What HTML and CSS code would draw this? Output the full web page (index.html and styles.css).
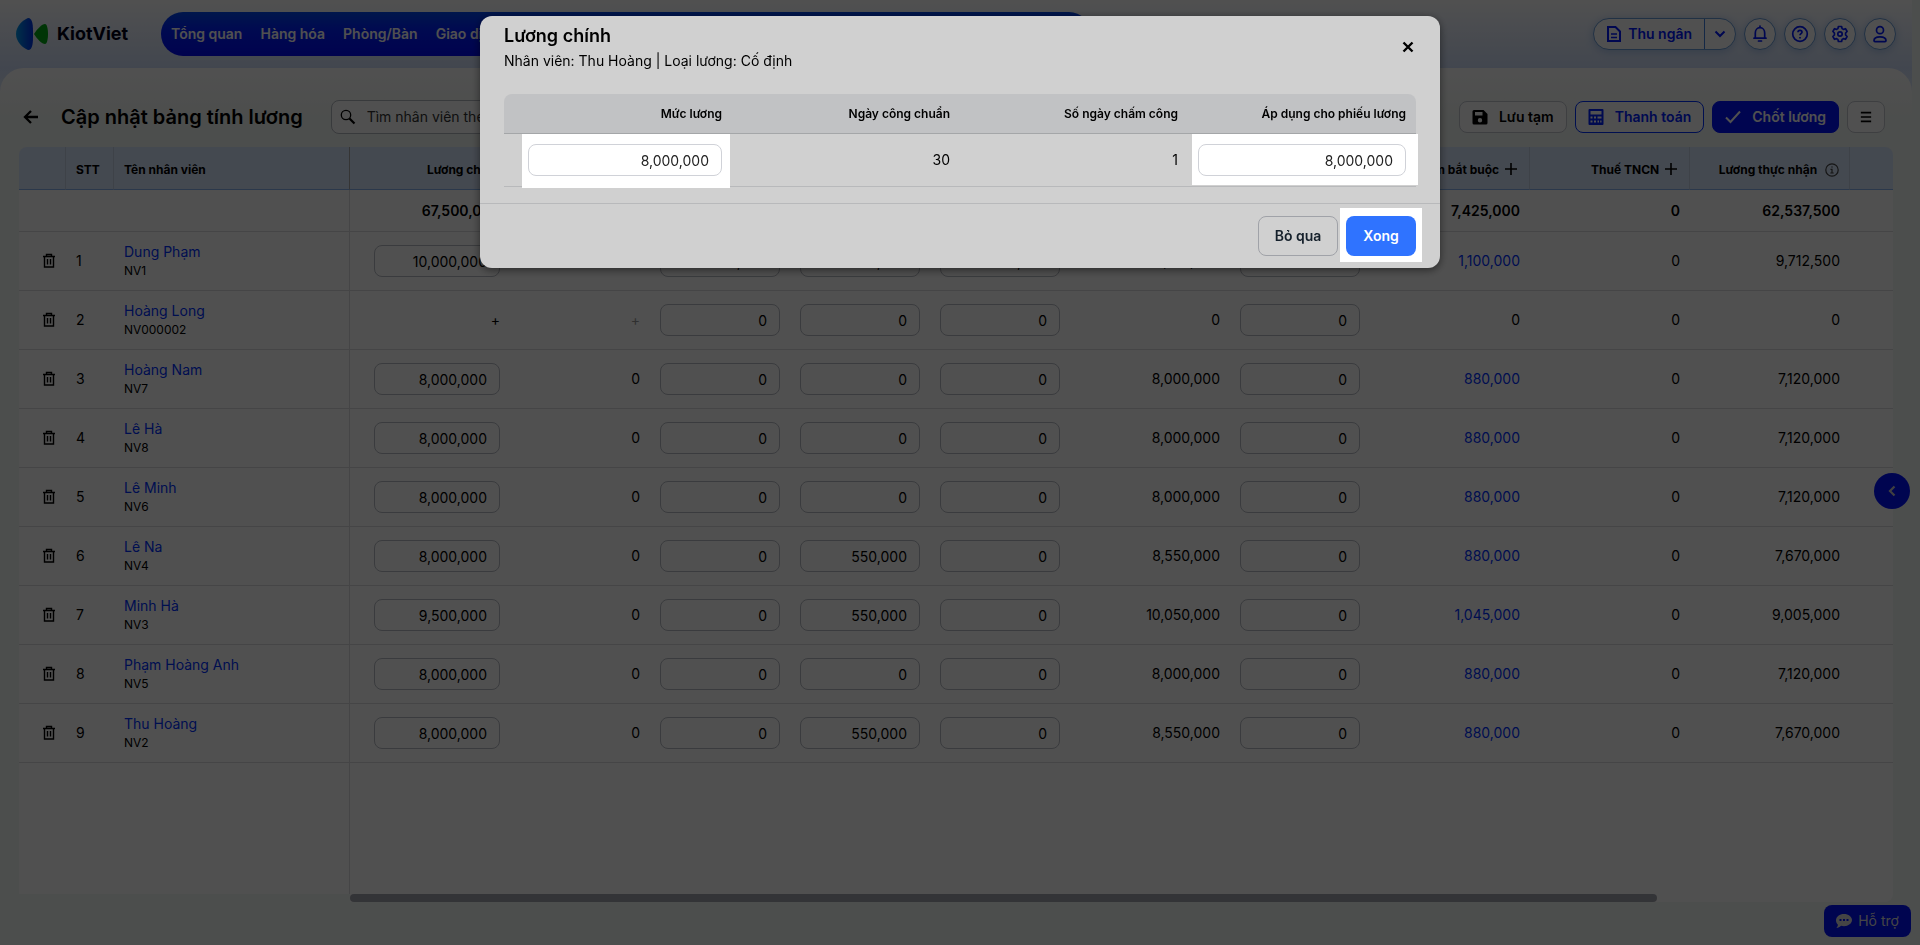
FILE: index.html
```html
<!DOCTYPE html>
<html lang="vi">
<head>
  <meta charset="UTF-8" />
  <meta name="viewport" content="width=device-width, initial-scale=1.0"/>
  <title>KiotViet - Cập nhật bảng tính lương</title>
  <link rel="stylesheet" href="styles.css">
</head>
<body>
  <svg class="sprite">
    <symbol id="i-trash" viewBox="0 0 14 16"><path d="M1 3.500h12M4.500 3V1.500h5V3M2.500 3.500v10.500h9V3.500M5.500 6v5.500M8.500 6v5.500" fill="none" stroke="currentColor" stroke-width="1.400"/></symbol>
  </svg>

  <div class="page">
    <header class="topbar">
      <a class="logo" href="#">
        <svg width="32" height="32" viewBox="0 0 32 32">
          <defs><linearGradient id="lg" x1="0" x2="1"><stop offset="0" stop-color="#0098e8"/><stop offset="1" stop-color="#0030e8"/></linearGradient></defs>
          <path d="M12 0C17 0 17 8 17 16s0 16-5 16C7 30 0 24 0 16S7 2 12 0z" fill="url(#lg)"/>
          <path d="M18 16C21 11 26 6 29 6c2 0 3 5 3 10s-1 10-3 10c-3 0-8-5-11-10z" fill="#00a814"/>
        </svg>
        <span>KiotViet</span>
      </a>
      <nav class="nav">
        <a href="#">Tổng quan</a>
        <a href="#">Hàng hóa</a>
        <a href="#">Phòng/Bàn</a>
        <a href="#">Giao dịch</a>
      </nav>
      <div class="tools">
        <div class="cashier">
          <button class="cashier-main">
            <svg width="14" height="18" viewBox="1 0 14 18" fill="none" stroke="currentColor" stroke-width="2"><path d="M2 2h7.500L14 6.500V16H2z"/><path d="M5 9h6M5 12.500h6" stroke-width="1.500"/></svg>
            Thu ngân
          </button>
          <button class="cashier-drop" aria-label="Mở rộng">
            <svg width="12" height="8" viewBox="0 0 12 8" fill="none" stroke="currentColor" stroke-width="2"><path d="M1.500 1.500L6 6l4.500-4.500"/></svg>
          </button>
        </div>
        <button class="round" aria-label="Thông báo">
          <svg width="18" height="18" viewBox="0 0 18 18" fill="none" stroke="currentColor" stroke-width="1.700"><path d="M9 1v1.500M3 13.200h12M4.300 13V8c0-3 2-5.300 4.700-5.300S13.700 5 13.700 8v5M7.500 16h3" stroke-linecap="round"/></svg>
        </button>
        <button class="round" aria-label="Trợ giúp">
          <svg width="18" height="18" viewBox="0 0 18 18" fill="none" stroke="currentColor" stroke-width="1.700"><circle cx="9" cy="9" r="7.300"/><path d="M7 7.200C7 4.800 11 4.800 11 7.200 11 8.700 9 8.700 9 10.300M9 12v1.500"/></svg>
        </button>
        <button class="round" aria-label="Thiết lập">
          <svg width="18" height="18" viewBox="0 0 18 18" fill="none" stroke="currentColor" stroke-width="1.700" stroke-linejoin="round"><path d="M7.400 1.500h3.200l.5 2.100 1.300.8 2.100-.7 1.600 2.800L14.600 8v2l1.500 1.500-1.600 2.800-2.100-.7-1.300.8-.5 2.100H7.400l-.5-2.100-1.300-.8-2.100.7-1.600-2.800L3.400 10V8L1.900 6.500l1.600-2.800 2.100.7 1.300-.8z"/><circle cx="9" cy="9" r="2.200"/></svg>
        </button>
        <button class="round" aria-label="Tài khoản">
          <svg width="18" height="18" viewBox="0 0 18 18" fill="none" stroke="currentColor" stroke-width="1.700"><circle cx="9" cy="5.200" r="3.500"/><path d="M3 15.600c0-5 12-5 12 0 0 .7-.3 1-1 1H4c-.7 0-1-.3-1-1z"/></svg>
        </button>
      </div>
    </header>

    <main class="panel">
      <div class="toolbar">
        <button class="back" aria-label="Quay lại">
          <svg width="16" height="14" viewBox="0 0 16 14" fill="none" stroke="currentColor" stroke-width="2.300"><path d="M15 7H2M8 1L2 7l6 6"/></svg>
        </button>
        <h1>Cập nhật bảng tính lương</h1>
        <label class="search">
          <svg width="16" height="16" viewBox="0 0 16 16" fill="none" stroke="currentColor"><circle cx="6" cy="6" r="4.700" stroke-width="1.300"/><path d="M9.500 9.500l5 5" stroke-width="2.200"/></svg>
          <input type="text" placeholder="Tìm nhân viên theo mã, tên" aria-label="Tìm nhân viên">
        </label>
        <div class="actions">
          <button class="btn">
            <svg width="16" height="16" viewBox="0 0 16 16"><path fill="currentColor" fill-rule="evenodd" d="M2 1h9.500L15.500 5v9a1.500 1.500 0 0 1-1.500 1.500H2A1.500 1.500 0 0 1 .5 14V2.500A1.500 1.500 0 0 1 2 1zm1 2v3.500h7.500V3zm5 6a2.200 2.200 0 1 0 0 4.400A2.200 2.200 0 0 0 8 9z"/></svg>
            Lưu tạm
          </button>
          <button class="btn outline">
            <svg width="16" height="16" viewBox="0 0 16 16"><path fill="currentColor" fill-rule="evenodd" d="M1.500 0h13a1 1 0 0 1 1 1v14a1 1 0 0 1-1 1h-13a1 1 0 0 1-1-1V1a1 1 0 0 1 1-1zM2.500 2v3.500h11V2zM2.500 7.500v2h2v-2zM6 7.500v2h2v-2zM9.500 7.500v2h4v-2zM2.500 11.500v2h2v-2zM6 11.500v2h2v-2zM9.500 11.500v2h1.500v-2zM12.200 11.500v2h1.300v-2z"/></svg>
            Thanh toán
          </button>
          <button class="btn primary">
            <svg width="16" height="16" viewBox="0 0 16 16" fill="none" stroke="currentColor" stroke-width="2"><path d="M1 8.500l4.500 4.500L15 2.500"/></svg>
            Chốt lương
          </button>
          <button class="btn menu" aria-label="Menu">
            <svg width="14" height="12" viewBox="0 0 14 12" stroke="currentColor" stroke-width="2"><path d="M1 1h12M1 6h12M1 11h12"/></svg>
          </button>
        </div>
      </div>

      <table class="payroll">
        <colgroup>
          <col class="c-del"><col class="c-stt"><col class="c-name">
          <col class="c-wide"><col class="c-mid"><col class="c-mid"><col class="c-mid"><col class="c-mid">
          <col class="c-wide"><col class="c-mid"><col class="c-wide"><col class="c-wide"><col class="c-wide"><col>
        </colgroup>
        <thead>
          <tr>
            <th></th>
            <th class="left">STT</th>
            <th class="left frozen">Tên nhân viên</th>
            <th>Lương chính</th><th></th><th></th><th></th><th></th><th></th><th></th>
            <th>Bảo hiểm bắt buộc <button class="add" aria-label="Thêm"><svg width="12" height="12" viewBox="0 0 12 12" stroke="currentColor" stroke-width="1.600"><path d="M6 0v12M0 6h12"/></svg></button></th>
            <th>Thuế TNCN <button class="add" aria-label="Thêm"><svg width="12" height="12" viewBox="0 0 12 12" stroke="currentColor" stroke-width="1.600"><path d="M6 0v12M0 6h12"/></svg></button></th>
            <th>Lương thực nhận <svg class="info" width="14" height="14" viewBox="0 0 14 14" fill="none" stroke="currentColor" stroke-width="1.200"><circle cx="7" cy="7" r="6.200"/><path d="M5.500 6.300H7V10M5.300 10h3.400M6.300 4h1.400"/></svg></th>
            <th></th>
          </tr>
        </thead>
        <tbody id="rows">
          <tr class="total">
            <td></td><td></td><td class="frozen"></td>
            <td>67,500,000</td><td></td><td></td><td></td><td></td><td></td><td></td>
            <td>7,425,000</td><td>0</td><td>62,537,500</td><td></td>
          </tr>
        </tbody>
      </table>
      <div class="scroll"><div class="thumb"></div></div>
    </main>
    <button class="expand" aria-label="Mở bảng bên">
      <svg width="8" height="12" viewBox="0 0 8 12" fill="none" stroke="currentColor" stroke-width="2.200"><path d="M6.500 1.500L2 6l4.500 4.500"/></svg>
    </button>
    <button class="support">
      <svg width="16" height="14" viewBox="0 0 16 14"><path fill="currentColor" fill-rule="evenodd" d="M8 0c4.400 0 8 2.700 8 6s-3.600 6.200-8 6.200c-1 0-2-.1-2.900-.4C4 12.900 2 13.900.4 13.900c.8-.9 1.400-2 1.500-3.200C.7 9.500 0 7.800 0 6.200 0 2.700 3.600 0 8 0zM3.500 5v2h2V5zM7 5v2h2V5zm3.500 0v2h2V5z"/></svg>
      Hỗ trợ
    </button>
  </div>

  <div class="overlay">
    <section class="modal" role="dialog" aria-labelledby="modalTitle">
      <div class="modal-head">
        <div>
          <h2 id="modalTitle">Lương chính</h2>
          <p>Nhân viên: Thu Hoàng | Loại lương: Cố định</p>
        </div>
        <button class="close" aria-label="Đóng">
          <svg width="12" height="12" viewBox="0 0 12 12" stroke="currentColor" stroke-width="2.400"><path d="M1.500 1.500l9 9M10.500 1.500l-9 9"/></svg>
        </button>
      </div>
      <table class="salary">
        <thead>
          <tr><th>Mức lương</th><th>Ngày công chuẩn</th><th>Số ngày chấm công</th><th>Áp dụng cho phiếu lương</th></tr>
        </thead>
        <tbody>
          <tr>
            <td class="first"><div class="lit lit-level"><input type="text" value="8,000,000" aria-label="Mức lương"></div></td>
            <td>30</td>
            <td>1</td>
            <td><div class="lit lit-apply"><input type="text" value="8,000,000" aria-label="Áp dụng cho phiếu lương"></div></td>
          </tr>
        </tbody>
      </table>
      <div class="modal-foot">
        <button class="skip">Bỏ qua</button>
        <div class="lit lit-done"><button class="done">Xong</button></div>
      </div>
    </section>
  </div>

  <script>
    // name, code, main salary, overtime, allowance, bonus, commission, gross, deduction, insurance, tax, net
    const staff = [
      ['Dung Phạm', 'NV1', '10,000,000', '0', '550,000', '250,000', '12,500', '10,812,500', '0', '1,100,000', '0', '9,712,500'],
      ['Hoàng Long', 'NV000002', '+', '+', '0', '0', '0', '0', '0', '0', '0', '0'],
      ['Hoàng Nam', 'NV7', '8,000,000', '0', '0', '0', '0', '8,000,000', '0', '880,000', '0', '7,120,000'],
      ['Lê Hà', 'NV8', '8,000,000', '0', '0', '0', '0', '8,000,000', '0', '880,000', '0', '7,120,000'],
      ['Lê Minh', 'NV6', '8,000,000', '0', '0', '0', '0', '8,000,000', '0', '880,000', '0', '7,120,000'],
      ['Lê Na', 'NV4', '8,000,000', '0', '0', '550,000', '0', '8,550,000', '0', '880,000', '0', '7,670,000'],
      ['Minh Hà', 'NV3', '9,500,000', '0', '0', '550,000', '0', '10,050,000', '0', '1,045,000', '0', '9,005,000'],
      ['Phạm Hoàng Anh', 'NV5', '8,000,000', '0', '0', '0', '0', '8,000,000', '0', '880,000', '0', '7,120,000'],
      ['Thu Hoàng', 'NV2', '8,000,000', '0', '0', '550,000', '0', '8,550,000', '0', '880,000', '0', '7,670,000']
    ];
    const editable = [2, 4, 5, 6, 8];

    function cell(value, i) {
      if (value === '+') return `<td class="plus${i === 3 ? ' muted' : ''}">+</td>`;
      if (editable.includes(i)) return `<td><input type="text" value="${value}" aria-label="Số tiền"></td>`;
      if (i === 9 && value !== '0') return `<td><a href="#">${value}</a></td>`;
      return `<td>${value}</td>`;
    }

    let html = '';
    staff.forEach((s, n) => {
      html += `<tr>
        <td class="del"><button aria-label="Xóa"><svg width="14" height="16"><use href="#i-trash"/></svg></button></td>
        <td class="left">${n + 1}</td>
        <td class="left frozen name"><a href="#">${s[0]}</a><small>${s[1]}</small></td>
        ${s.slice(2).map((v, i) => cell(v, i + 2)).join('')}<td></td></tr>`;
    });
    html += '<tr class="filler"><td></td><td></td><td class="frozen"></td><td colspan="11"></td></tr>';
    document.getElementById('rows').insertAdjacentHTML('beforeend', html);
  </script>
</body>
</html>
```

FILE: styles.css
```css
* {
  box-sizing: border-box;
}
body {
  margin: 0;
  font-family: Inter, "Noto Sans", sans-serif;
  font-size: 14px;
  line-height: 20px;
  color: #000;
  background: #f3f7f4;
  overflow: hidden;
}
button, input {
  font: inherit;
  color: inherit;
}
button {
  cursor: pointer;
  display: inline-flex;
  align-items: center;
  justify-content: center;
  padding: 0;
  background: none;
  border: none;
}
a {
  color: #0030ff;
  text-decoration: none;
}
.sprite {
  display: none;
}

/* top bar */
.page {
  margin-right: 8px;
  min-height: 100vh;
  background: linear-gradient(#fff, #d2e0fa 68px, #f3f7f4 140px);
}
.topbar {
  display: flex;
  align-items: center;
  height: 68px;
  padding: 0 16px;
}
.logo {
  display: flex;
  align-items: center;
  gap: 9px;
  width: 145px;
  color: #000018;
  font-size: 18px;
  font-weight: 700;
}
.nav {
  display: flex;
  align-items: center;
  gap: 18px;
  width: 930px;
  height: 44px;
  padding: 0 10px;
  border-radius: 22px;
  background: linear-gradient(#0048f0, #0020ff 40%, #0008f8);
}
.nav a {
  color: #fff;
  font-weight: 600;
}
.tools {
  display: flex;
  gap: 8px;
  margin-left: auto;
  color: #0018ff;
}
.cashier {
  display: flex;
  height: 32px;
  border: 1px solid #6a9cd8;
  border-radius: 16px;
  background: #fff;
  box-shadow: 0 2px 8px #a8c4ec;
}
.cashier-main {
  gap: 7px;
  padding: 0 12px 0 13px;
  font-weight: 600;
}
.cashier-drop {
  width: 31px;
  border-left: 1px solid #4080e0;
}
.round {
  width: 32px;
  height: 32px;
  border: 1px solid #6a9cd8;
  border-radius: 50%;
  background: #fff;
  box-shadow: 0 2px 8px #a8c4ec;
}

/* content */
.panel {
  min-height: calc(100vh - 68px);
  padding: 32px 19px 24px;
  border-radius: 24px;
  background: linear-gradient(#fff, #f3f7f4 48px);
}
.toolbar {
  display: flex;
  align-items: center;
  height: 34px;
  margin-bottom: 13px;
  padding: 0 8px 0 4px;
}
.back {
  margin-right: 22px;
}
h1 {
  margin: 0 28px 0 0;
  font-size: 20px;
  font-weight: 600;
}
.search {
  display: flex;
  align-items: center;
  gap: 11px;
  width: 380px;
  height: 34px;
  padding: 0 8px;
  border: 1px solid #b4b8c0;
  border-radius: 8px;
  background: #fff;
}
.search input {
  flex: 1;
  padding: 0;
  border: none;
  background: none;
}
.search input::placeholder {
  color: #333;
}
.actions {
  display: flex;
  gap: 8px;
  margin-left: auto;
}
.btn {
  gap: 11px;
  height: 32px;
  padding: 0 12px;
  border: 1px solid #c4c8d0;
  border-radius: 8px;
  background: #fff;
  font-weight: 600;
}
.outline {
  border-color: #0030ff;
  color: #0020ff;
}
.primary {
  border-color: #0010ff;
  background: #0010ff;
  color: #fff;
}
.menu {
  width: 38px;
}

/* payroll table */
.payroll {
  width: 100%;
  table-layout: fixed;
  border-collapse: separate;
  border-spacing: 0;
}
.c-del { width: 47px; }
.c-stt { width: 48px; }
.c-name { width: 236px; }
.c-wide { width: 160px; }
.c-mid { width: 140px; }
.payroll th {
  height: 43px;
  padding: 3px 10px 0;
  background: #dae8ff;
  border-right: 1px solid #c6d2e4;
  border-bottom: 1px solid #88b4f0;
  font-size: 12px;
  font-weight: 700;
  text-align: right;
  white-space: nowrap;
}
.payroll th:first-child {
  border-radius: 8px 0 0 0;
}
.payroll th:last-child {
  border-right: none;
  border-radius: 0 8px 0 0;
}
.payroll td {
  height: 59px;
  padding: 0 10px;
  background: #fff;
  border-bottom: 1px solid #dcdce0;
  text-align: right;
}
.payroll .left {
  text-align: left;
}
.payroll .frozen {
  border-right: 1px solid #dcdce0;
}
.payroll th.frozen {
  border-right-color: #a8a8a8;
}
.payroll .total td {
  height: 42px;
  font-weight: 600;
}
.payroll .filler td {
  height: 131px;
  border-bottom: none;
}
.payroll input {
  display: block;
  width: 100%;
  height: 32px;
  padding: 0 12px;
  border: 1px solid #b8bcc4;
  border-radius: 8px;
  background: #fff;
  text-align: right;
}
.payroll td:nth-child(4) {
  padding-left: 24px;
}
.del button {
  display: flex;
  margin-left: auto;
}
.add {
  margin: 0 2px 0 3px;
  vertical-align: -1px;
}
.info {
  margin-left: 5px;
  vertical-align: -3px;
  color: #444;
}
.name a {
  display: block;
}
.name small {
  display: block;
  font-size: 12px;
  line-height: 18px;
}
.muted {
  color: #999;
}
.scroll {
  margin-left: 331px;
  background: #fff;
  border-radius: 0 0 8px 0;
}
.thumb {
  width: 84.7%;
  height: 8px;
  border-radius: 4px;
  background: #a4a6b0;
}

/* floating buttons */
.expand {
  position: fixed;
  right: 10px;
  top: 473px;
  width: 36px;
  height: 36px;
  border-radius: 50%;
  background: #0010ff;
  color: #ccc;
}
.support {
  position: fixed;
  right: 9px;
  bottom: 8px;
  gap: 6px;
  width: 87px;
  height: 32px;
  border-radius: 8px;
  background: #0010ff;
  color: #ddd;
}

/* modal */
.overlay {
  position: fixed;
  inset: 0;
  padding-top: 16px;
  background: rgba(0, 0, 0, 0.686);
}
.modal {
  width: 960px;
  margin: 0 auto;
  border-radius: 12px;
  background: #d0d0d0;
  box-shadow: 0 2px 8px rgba(0, 0, 0, 0.5);
}
.modal-head {
  display: flex;
  justify-content: space-between;
  align-items: center;
  height: 62px;
  padding: 0 24px;
}
h2 {
  margin: 0;
  font-size: 18px;
  font-weight: 600;
  line-height: 24px;
}
.modal p {
  margin: 3px 0 0;
}
.close {
  width: 16px;
  height: 16px;
}
.salary {
  width: 912px;
  margin: 16px 24px 0;
  table-layout: fixed;
  border-spacing: 0;
}
.salary th {
  height: 40px;
  padding: 0 10px;
  background: #c1c2c4;
  border-bottom: 1px solid #a4a6a8;
  font-size: 12px;
  font-weight: 600;
  text-align: right;
}
.salary th:first-child {
  border-radius: 8px 0 0 0;
}
.salary th:last-child {
  border-radius: 0 8px 0 0;
}
.salary td {
  height: 53px;
  padding: 0 10px;
  border-bottom: 1px solid #b8b9bb;
  text-align: right;
}
.salary input {
  display: block;
  width: 100%;
  height: 32px;
  padding: 0 12px;
  border: 1px solid #d0d2d8;
  border-radius: 8px;
  background: #fff;
  color: #222;
  text-align: right;
}
.salary td.first {
  padding-left: 24px;
}
.modal-foot {
  display: flex;
  justify-content: flex-end;
  gap: 8px;
  margin-top: 16px;
  padding: 12px 24px;
  border-top: 1px solid #b8b9bb;
}
.modal-foot button {
  height: 40px;
  border-radius: 8px;
  font-weight: 600;
}
.modal-foot .skip {
  width: 80px;
  border: 1px solid #a0a2a8;
  color: #15202b;
}
.modal-foot .done {
  width: 70px;
  background: #2f73ff;
  color: #fff;
}

/* white spotlight behind the highlighted controls */
.lit {
  position: relative;
  z-index: 0;
}
.lit::before {
  content: "";
  position: absolute;
  z-index: -1;
  background: #fff;
}
.lit-level::before {
  inset: -10px -8px -12px -6px;
}
.lit-apply::before {
  inset: -10px -12px -9px -6px;
}
.lit-done::before {
  inset: -8px -6px -6px;
}
```
